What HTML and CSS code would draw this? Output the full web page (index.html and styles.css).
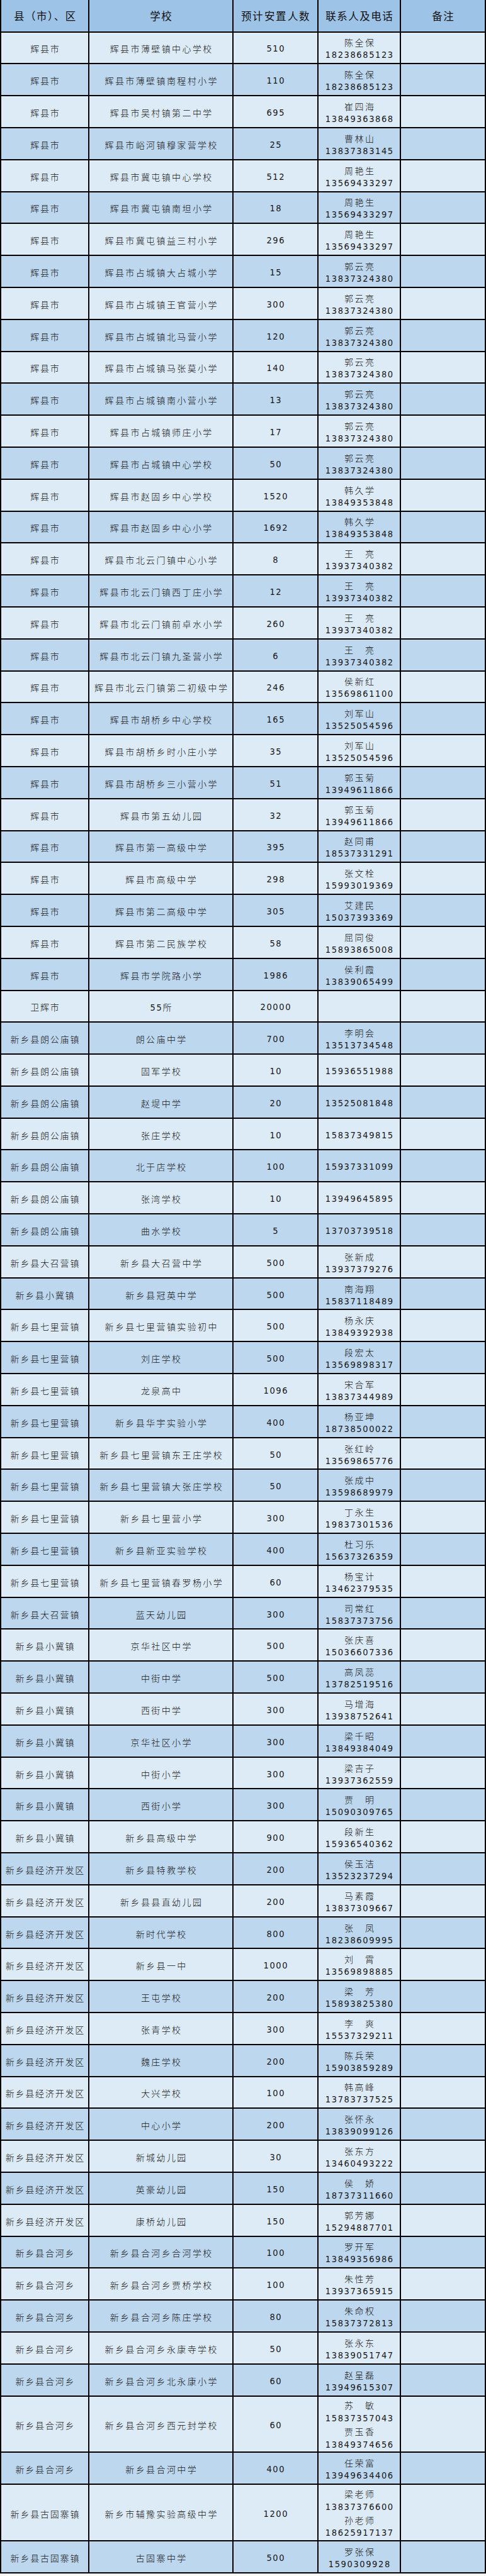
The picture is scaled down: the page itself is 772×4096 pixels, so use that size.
FILE: index.html
```html
<!DOCTYPE html>
<html lang="zh-CN">
<head>
<meta charset="utf-8">
<title>预计安置人数</title>
<link rel="stylesheet" href="styles.css">
</head>
<body>
<div class="sheet">
<div class="row head"><div class="c c1">县（市）、区</div><div class="c c2">学校</div><div class="c c3">预计安置人数</div><div class="c c4">联系人及电话</div><div class="c c5">备注</div></div>
<div class="row l"><div class="c c1">辉县市</div><div class="c c2">辉县市薄壁镇中心学校</div><div class="c c3">510</div><div class="c c4"><span class="nm">陈全保</span><span class="ph">18238685123</span></div><div class="c c5"></div></div>
<div class="row d"><div class="c c1">辉县市</div><div class="c c2">辉县市薄壁镇南程村小学</div><div class="c c3">110</div><div class="c c4"><span class="nm">陈全保</span><span class="ph">18238685123</span></div><div class="c c5"></div></div>
<div class="row l"><div class="c c1">辉县市</div><div class="c c2">辉县市吴村镇第二中学</div><div class="c c3">695</div><div class="c c4"><span class="nm">崔四海</span><span class="ph">13849363868</span></div><div class="c c5"></div></div>
<div class="row d"><div class="c c1">辉县市</div><div class="c c2">辉县市峪河镇穆家营学校</div><div class="c c3">25</div><div class="c c4"><span class="nm">曹林山</span><span class="ph">13837383145</span></div><div class="c c5"></div></div>
<div class="row l"><div class="c c1">辉县市</div><div class="c c2">辉县市冀屯镇中心学校</div><div class="c c3">512</div><div class="c c4"><span class="nm">周艳生</span><span class="ph">13569433297</span></div><div class="c c5"></div></div>
<div class="row d"><div class="c c1">辉县市</div><div class="c c2">辉县市冀屯镇南坦小学</div><div class="c c3">18</div><div class="c c4"><span class="nm">周艳生</span><span class="ph">13569433297</span></div><div class="c c5"></div></div>
<div class="row l"><div class="c c1">辉县市</div><div class="c c2">辉县市冀屯镇益三村小学</div><div class="c c3">296</div><div class="c c4"><span class="nm">周艳生</span><span class="ph">13569433297</span></div><div class="c c5"></div></div>
<div class="row d"><div class="c c1">辉县市</div><div class="c c2">辉县市占城镇大占城小学</div><div class="c c3">15</div><div class="c c4"><span class="nm">郭云亮</span><span class="ph">13837324380</span></div><div class="c c5"></div></div>
<div class="row l"><div class="c c1">辉县市</div><div class="c c2">辉县市占城镇王官营小学</div><div class="c c3">300</div><div class="c c4"><span class="nm">郭云亮</span><span class="ph">13837324380</span></div><div class="c c5"></div></div>
<div class="row d"><div class="c c1">辉县市</div><div class="c c2">辉县市占城镇北马营小学</div><div class="c c3">120</div><div class="c c4"><span class="nm">郭云亮</span><span class="ph">13837324380</span></div><div class="c c5"></div></div>
<div class="row l"><div class="c c1">辉县市</div><div class="c c2">辉县市占城镇马张莫小学</div><div class="c c3">140</div><div class="c c4"><span class="nm">郭云亮</span><span class="ph">13837324380</span></div><div class="c c5"></div></div>
<div class="row d"><div class="c c1">辉县市</div><div class="c c2">辉县市占城镇南小营小学</div><div class="c c3">13</div><div class="c c4"><span class="nm">郭云亮</span><span class="ph">13837324380</span></div><div class="c c5"></div></div>
<div class="row l"><div class="c c1">辉县市</div><div class="c c2">辉县市占城镇师庄小学</div><div class="c c3">17</div><div class="c c4"><span class="nm">郭云亮</span><span class="ph">13837324380</span></div><div class="c c5"></div></div>
<div class="row d"><div class="c c1">辉县市</div><div class="c c2">辉县市占城镇中心学校</div><div class="c c3">50</div><div class="c c4"><span class="nm">郭云亮</span><span class="ph">13837324380</span></div><div class="c c5"></div></div>
<div class="row l"><div class="c c1">辉县市</div><div class="c c2">辉县市赵固乡中心学校</div><div class="c c3">1520</div><div class="c c4"><span class="nm">韩久学</span><span class="ph">13849353848</span></div><div class="c c5"></div></div>
<div class="row d"><div class="c c1">辉县市</div><div class="c c2">辉县市赵固乡中心小学</div><div class="c c3">1692</div><div class="c c4"><span class="nm">韩久学</span><span class="ph">13849353848</span></div><div class="c c5"></div></div>
<div class="row l"><div class="c c1">辉县市</div><div class="c c2">辉县市北云门镇中心小学</div><div class="c c3">8</div><div class="c c4"><span class="nm">王　亮</span><span class="ph">13937340382</span></div><div class="c c5"></div></div>
<div class="row d"><div class="c c1">辉县市</div><div class="c c2">辉县市北云门镇西丁庄小学</div><div class="c c3">12</div><div class="c c4"><span class="nm">王　亮</span><span class="ph">13937340382</span></div><div class="c c5"></div></div>
<div class="row l"><div class="c c1">辉县市</div><div class="c c2">辉县市北云门镇前卓水小学</div><div class="c c3">260</div><div class="c c4"><span class="nm">王　亮</span><span class="ph">13937340382</span></div><div class="c c5"></div></div>
<div class="row d"><div class="c c1">辉县市</div><div class="c c2">辉县市北云门镇九圣营小学</div><div class="c c3">6</div><div class="c c4"><span class="nm">王　亮</span><span class="ph">13937340382</span></div><div class="c c5"></div></div>
<div class="row l"><div class="c c1">辉县市</div><div class="c c2">辉县市北云门镇第二初级中学</div><div class="c c3">246</div><div class="c c4"><span class="nm">侯新红</span><span class="ph">13569861100</span></div><div class="c c5"></div></div>
<div class="row d"><div class="c c1">辉县市</div><div class="c c2">辉县市胡桥乡中心学校</div><div class="c c3">165</div><div class="c c4"><span class="nm">刘军山</span><span class="ph">13525054596</span></div><div class="c c5"></div></div>
<div class="row l"><div class="c c1">辉县市</div><div class="c c2">辉县市胡桥乡时小庄小学</div><div class="c c3">35</div><div class="c c4"><span class="nm">刘军山</span><span class="ph">13525054596</span></div><div class="c c5"></div></div>
<div class="row d"><div class="c c1">辉县市</div><div class="c c2">辉县市胡桥乡三小营小学</div><div class="c c3">51</div><div class="c c4"><span class="nm">郭玉菊</span><span class="ph">13949611866</span></div><div class="c c5"></div></div>
<div class="row l"><div class="c c1">辉县市</div><div class="c c2">辉县市第五幼儿园</div><div class="c c3">32</div><div class="c c4"><span class="nm">郭玉菊</span><span class="ph">13949611866</span></div><div class="c c5"></div></div>
<div class="row d"><div class="c c1">辉县市</div><div class="c c2">辉县市第一高级中学</div><div class="c c3">395</div><div class="c c4"><span class="nm">赵同甫</span><span class="ph">18537331291</span></div><div class="c c5"></div></div>
<div class="row l"><div class="c c1">辉县市</div><div class="c c2">辉县市高级中学</div><div class="c c3">298</div><div class="c c4"><span class="nm">张文栓</span><span class="ph">15993019369</span></div><div class="c c5"></div></div>
<div class="row d"><div class="c c1">辉县市</div><div class="c c2">辉县市第二高级中学</div><div class="c c3">305</div><div class="c c4"><span class="nm">艾建民</span><span class="ph">15037393369</span></div><div class="c c5"></div></div>
<div class="row l"><div class="c c1">辉县市</div><div class="c c2">辉县市第二民族学校</div><div class="c c3">58</div><div class="c c4"><span class="nm">屈同俊</span><span class="ph">15893865008</span></div><div class="c c5"></div></div>
<div class="row d"><div class="c c1">辉县市</div><div class="c c2">辉县市学院路小学</div><div class="c c3">1986</div><div class="c c4"><span class="nm">侯利霞</span><span class="ph">13839065499</span></div><div class="c c5"></div></div>
<div class="row l"><div class="c c1">卫辉市</div><div class="c c2"><span class="mix"><span class="dg">55</span>所</span></div><div class="c c3">20000</div><div class="c c4"></div><div class="c c5"></div></div>
<div class="row d"><div class="c c1">新乡县朗公庙镇</div><div class="c c2">朗公庙中学</div><div class="c c3">700</div><div class="c c4"><span class="nm">李明会</span><span class="ph">13513734548</span></div><div class="c c5"></div></div>
<div class="row l"><div class="c c1">新乡县朗公庙镇</div><div class="c c2">固军学校</div><div class="c c3">10</div><div class="c c4"><span class="ph">15936551988</span></div><div class="c c5"></div></div>
<div class="row d"><div class="c c1">新乡县朗公庙镇</div><div class="c c2">赵堤中学</div><div class="c c3">20</div><div class="c c4"><span class="ph">13525081848</span></div><div class="c c5"></div></div>
<div class="row l"><div class="c c1">新乡县朗公庙镇</div><div class="c c2">张庄学校</div><div class="c c3">10</div><div class="c c4"><span class="ph">15837349815</span></div><div class="c c5"></div></div>
<div class="row d"><div class="c c1">新乡县朗公庙镇</div><div class="c c2">北于店学校</div><div class="c c3">100</div><div class="c c4"><span class="ph">15937331099</span></div><div class="c c5"></div></div>
<div class="row l"><div class="c c1">新乡县朗公庙镇</div><div class="c c2">张湾学校</div><div class="c c3">10</div><div class="c c4"><span class="ph">13949645895</span></div><div class="c c5"></div></div>
<div class="row d"><div class="c c1">新乡县朗公庙镇</div><div class="c c2">曲水学校</div><div class="c c3">5</div><div class="c c4"><span class="ph">13703739518</span></div><div class="c c5"></div></div>
<div class="row l"><div class="c c1">新乡县大召营镇</div><div class="c c2">新乡县大召营中学</div><div class="c c3">500</div><div class="c c4"><span class="nm">张新成</span><span class="ph">13937379276</span></div><div class="c c5"></div></div>
<div class="row d"><div class="c c1">新乡县小冀镇</div><div class="c c2">新乡县冠英中学</div><div class="c c3">500</div><div class="c c4"><span class="nm">南海翔</span><span class="ph">15837118489</span></div><div class="c c5"></div></div>
<div class="row l"><div class="c c1">新乡县七里营镇</div><div class="c c2">新乡县七里营镇实验初中</div><div class="c c3">500</div><div class="c c4"><span class="nm">杨永庆</span><span class="ph">13849392938</span></div><div class="c c5"></div></div>
<div class="row d"><div class="c c1">新乡县七里营镇</div><div class="c c2">刘庄学校</div><div class="c c3">500</div><div class="c c4"><span class="nm">段宏太</span><span class="ph">13569898317</span></div><div class="c c5"></div></div>
<div class="row l"><div class="c c1">新乡县七里营镇</div><div class="c c2">龙泉高中</div><div class="c c3">1096</div><div class="c c4"><span class="nm">宋合军</span><span class="ph">13837344989</span></div><div class="c c5"></div></div>
<div class="row d"><div class="c c1">新乡县七里营镇</div><div class="c c2">新乡县华宇实验小学</div><div class="c c3">400</div><div class="c c4"><span class="nm">杨亚坤</span><span class="ph">18738500022</span></div><div class="c c5"></div></div>
<div class="row l"><div class="c c1">新乡县七里营镇</div><div class="c c2">新乡县七里营镇东王庄学校</div><div class="c c3">50</div><div class="c c4"><span class="nm">张红岭</span><span class="ph">13569865776</span></div><div class="c c5"></div></div>
<div class="row d"><div class="c c1">新乡县七里营镇</div><div class="c c2">新乡县七里营镇大张庄学校</div><div class="c c3">50</div><div class="c c4"><span class="nm">张成中</span><span class="ph">13598689979</span></div><div class="c c5"></div></div>
<div class="row l"><div class="c c1">新乡县七里营镇</div><div class="c c2">新乡县七里营小学</div><div class="c c3">300</div><div class="c c4"><span class="nm">丁永生</span><span class="ph">19837301536</span></div><div class="c c5"></div></div>
<div class="row d"><div class="c c1">新乡县七里营镇</div><div class="c c2">新乡县新亚实验学校</div><div class="c c3">400</div><div class="c c4"><span class="nm">杜习乐</span><span class="ph">15637326359</span></div><div class="c c5"></div></div>
<div class="row l"><div class="c c1">新乡县七里营镇</div><div class="c c2">新乡县七里营镇春罗杨小学</div><div class="c c3">60</div><div class="c c4"><span class="nm">杨宝计</span><span class="ph">13462379535</span></div><div class="c c5"></div></div>
<div class="row d"><div class="c c1">新乡县大召营镇</div><div class="c c2">蓝天幼儿园</div><div class="c c3">300</div><div class="c c4"><span class="nm">司常红</span><span class="ph">15837373756</span></div><div class="c c5"></div></div>
<div class="row l"><div class="c c1">新乡县小冀镇</div><div class="c c2">京华社区中学</div><div class="c c3">500</div><div class="c c4"><span class="nm">张庆喜</span><span class="ph">15036607336</span></div><div class="c c5"></div></div>
<div class="row d"><div class="c c1">新乡县小冀镇</div><div class="c c2">中街中学</div><div class="c c3">500</div><div class="c c4"><span class="nm">高凤蕊</span><span class="ph">13782519516</span></div><div class="c c5"></div></div>
<div class="row l"><div class="c c1">新乡县小冀镇</div><div class="c c2">西街中学</div><div class="c c3">300</div><div class="c c4"><span class="nm">马增海</span><span class="ph">13938752641</span></div><div class="c c5"></div></div>
<div class="row d"><div class="c c1">新乡县小冀镇</div><div class="c c2">京华社区小学</div><div class="c c3">300</div><div class="c c4"><span class="nm">梁千昭</span><span class="ph">13849384049</span></div><div class="c c5"></div></div>
<div class="row l"><div class="c c1">新乡县小冀镇</div><div class="c c2">中街小学</div><div class="c c3">300</div><div class="c c4"><span class="nm">梁吉子</span><span class="ph">13937362559</span></div><div class="c c5"></div></div>
<div class="row d"><div class="c c1">新乡县小冀镇</div><div class="c c2">西街小学</div><div class="c c3">300</div><div class="c c4"><span class="nm">贾　明</span><span class="ph">15090309765</span></div><div class="c c5"></div></div>
<div class="row l"><div class="c c1">新乡县小冀镇</div><div class="c c2">新乡县高级中学</div><div class="c c3">900</div><div class="c c4"><span class="nm">段新生</span><span class="ph">15936540362</span></div><div class="c c5"></div></div>
<div class="row d"><div class="c c1">新乡县经济开发区</div><div class="c c2">新乡县特教学校</div><div class="c c3">200</div><div class="c c4"><span class="nm">侯玉洁</span><span class="ph">13523237294</span></div><div class="c c5"></div></div>
<div class="row l"><div class="c c1">新乡县经济开发区</div><div class="c c2">新乡县县直幼儿园</div><div class="c c3">200</div><div class="c c4"><span class="nm">马素霞</span><span class="ph">13837309667</span></div><div class="c c5"></div></div>
<div class="row d"><div class="c c1">新乡县经济开发区</div><div class="c c2">新时代学校</div><div class="c c3">800</div><div class="c c4"><span class="nm">张　凤</span><span class="ph">18238609995</span></div><div class="c c5"></div></div>
<div class="row l"><div class="c c1">新乡县经济开发区</div><div class="c c2">新乡县一中</div><div class="c c3">1000</div><div class="c c4"><span class="nm">刘　霄</span><span class="ph">13569898885</span></div><div class="c c5"></div></div>
<div class="row d"><div class="c c1">新乡县经济开发区</div><div class="c c2">王屯学校</div><div class="c c3">200</div><div class="c c4"><span class="nm">梁　芳</span><span class="ph">15893825380</span></div><div class="c c5"></div></div>
<div class="row l"><div class="c c1">新乡县经济开发区</div><div class="c c2">张青学校</div><div class="c c3">300</div><div class="c c4"><span class="nm">李　爽</span><span class="ph">15537329211</span></div><div class="c c5"></div></div>
<div class="row d"><div class="c c1">新乡县经济开发区</div><div class="c c2">魏庄学校</div><div class="c c3">200</div><div class="c c4"><span class="nm">陈兵荣</span><span class="ph">15903859289</span></div><div class="c c5"></div></div>
<div class="row l"><div class="c c1">新乡县经济开发区</div><div class="c c2">大兴学校</div><div class="c c3">100</div><div class="c c4"><span class="nm">韩高峰</span><span class="ph">13783737525</span></div><div class="c c5"></div></div>
<div class="row d"><div class="c c1">新乡县经济开发区</div><div class="c c2">中心小学</div><div class="c c3">200</div><div class="c c4"><span class="nm">张怀永</span><span class="ph">13839099126</span></div><div class="c c5"></div></div>
<div class="row l"><div class="c c1">新乡县经济开发区</div><div class="c c2">新城幼儿园</div><div class="c c3">30</div><div class="c c4"><span class="nm">张东方</span><span class="ph">13460493222</span></div><div class="c c5"></div></div>
<div class="row d"><div class="c c1">新乡县经济开发区</div><div class="c c2">英豪幼儿园</div><div class="c c3">150</div><div class="c c4"><span class="nm">侯　娇</span><span class="ph">18737311660</span></div><div class="c c5"></div></div>
<div class="row l"><div class="c c1">新乡县经济开发区</div><div class="c c2">康桥幼儿园</div><div class="c c3">150</div><div class="c c4"><span class="nm">郭芳娜</span><span class="ph">15294887701</span></div><div class="c c5"></div></div>
<div class="row d"><div class="c c1">新乡县合河乡</div><div class="c c2">新乡县合河乡合河学校</div><div class="c c3">100</div><div class="c c4"><span class="nm">罗开军</span><span class="ph">13849356986</span></div><div class="c c5"></div></div>
<div class="row l"><div class="c c1">新乡县合河乡</div><div class="c c2">新乡县合河乡贾桥学校</div><div class="c c3">100</div><div class="c c4"><span class="nm">朱性芳</span><span class="ph">13937365915</span></div><div class="c c5"></div></div>
<div class="row d"><div class="c c1">新乡县合河乡</div><div class="c c2">新乡县合河乡陈庄学校</div><div class="c c3">80</div><div class="c c4"><span class="nm">朱命权</span><span class="ph">15837372813</span></div><div class="c c5"></div></div>
<div class="row l"><div class="c c1">新乡县合河乡</div><div class="c c2">新乡县合河乡永康寺学校</div><div class="c c3">50</div><div class="c c4"><span class="nm">张永东</span><span class="ph">13839051747</span></div><div class="c c5"></div></div>
<div class="row d"><div class="c c1">新乡县合河乡</div><div class="c c2">新乡县合河乡北永康小学</div><div class="c c3">60</div><div class="c c4"><span class="nm">赵呈磊</span><span class="ph">13949615307</span></div><div class="c c5"></div></div>
<div class="row l tall"><div class="c c1">新乡县合河乡</div><div class="c c2">新乡县合河乡西元封学校</div><div class="c c3">60</div><div class="c c4"><span class="nm">苏　敏</span><span class="ph">15837357043</span><span class="nm">贾玉香</span><span class="ph">13849374656</span></div><div class="c c5"></div></div>
<div class="row d"><div class="c c1">新乡县合河乡</div><div class="c c2">新乡县合河中学</div><div class="c c3">400</div><div class="c c4"><span class="nm">任荣富</span><span class="ph">13949634406</span></div><div class="c c5"></div></div>
<div class="row l tall"><div class="c c1">新乡县古固寨镇</div><div class="c c2">新乡市辅豫实验高级中学</div><div class="c c3">1200</div><div class="c c4"><span class="nm">梁老师</span><span class="ph">13837376600</span><span class="nm">孙老师</span><span class="ph">18625917137</span></div><div class="c c5"></div></div>
<div class="row d"><div class="c c1">新乡县古固寨镇</div><div class="c c2">古固寨中学</div><div class="c c3">500</div><div class="c c4"><span class="nm">罗张保</span><span class="ph">1590309928</span></div><div class="c c5"></div></div>
</div>
</body>
</html>
```

FILE: styles.css
```css
* {
  box-sizing: border-box;
  margin: 0;
  padding: 0;
}

body {
  margin: 0;
  background: #ffffff;
  color: #151515;
  font-family: "Noto Sans CJK SC", "Noto Sans", sans-serif;
}

.sheet {
  width: 772px;
}

.row {
  display: grid;
  grid-template-columns: 142px 229px 135px 131px 135px;
  height: 50.8px;
}

.row.head {
  height: 51.6px;
  background: #9dc3e6;
}

.row.l {
  background: #ddebf7;
}

.row.d {
  background: #bdd7ee;
}

.row.tall {
  height: 89.9px;
}

.c {
  display: flex;
  flex-direction: column;
  align-items: center;
  justify-content: center;
  border-right: 2px solid #000;
  border-bottom: 2px solid #000;
  padding-top: 3px;
  text-align: center;
  white-space: nowrap;
}

.c1 {
  border-left: 2px solid #000;
}

.row .c1,
.row .c2 {
  font-size: 14px;
  font-weight: 300;
  letter-spacing: 2.4px;
  padding-left: 2.4px;
}

.row .c1 {
  letter-spacing: 1.8px;
  padding-left: 1.8px;
}

.row .c3 {
  font-family: "Liberation Sans Narrow", "DejaVu Sans Condensed", "Liberation Sans", sans-serif;
  font-size: 14.5px;
  letter-spacing: 1.6px;
  padding-left: 1.6px;
}

.mix {
  display: block;
}

.dg {
  font-family: "Liberation Sans Narrow", "DejaVu Sans Condensed", "Liberation Sans", sans-serif;
  font-size: 14.5px;
  letter-spacing: 1.6px;
}

.nm {
  font-size: 14px;
  font-weight: 300;
  letter-spacing: 2.4px;
  margin-right: -2.4px;
  line-height: 20px;
}

.ph {
  font-family: "Liberation Sans Narrow", "DejaVu Sans Condensed", "Liberation Sans", sans-serif;
  font-size: 14.5px;
  letter-spacing: 1.6px;
  margin-right: -1.6px;
  line-height: 20px;
}

.tall .nm,
.tall .ph {
  line-height: 20.8px;
}

.row.head .c {
  padding-top: 0;
  padding-left: 1.5px;
  font-size: 16.5px;
  font-weight: 400;
  letter-spacing: 1.5px;
  color: #111;
}
```
